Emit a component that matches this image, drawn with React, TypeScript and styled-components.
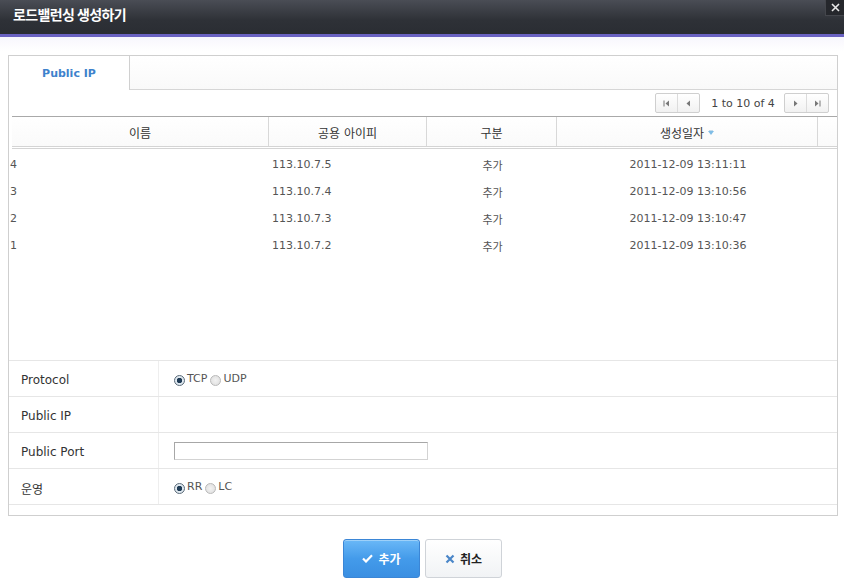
import React from "react";
import styled, { createGlobalStyle } from "styled-components";

const GlobalStyle = createGlobalStyle`
  html, body {
    margin: 0;
    padding: 0;
    background: #ffffff;
  }
  body {
    font-family: "DejaVu Sans", "Noto Sans CJK KR", sans-serif;
    font-size: 11px;
    color: #333;
  }
`;

const KR = `"DejaVu Sans", "Noto Sans CJK KR", sans-serif`;

type Row = { name: string; ip: string; kind: string; date: string };

const rows: Row[] = [
  { name: "4", ip: "113.10.7.5", kind: "추가", date: "2011-12-09 13:11:11" },
  { name: "3", ip: "113.10.7.4", kind: "추가", date: "2011-12-09 13:10:56" },
  { name: "2", ip: "113.10.7.3", kind: "추가", date: "2011-12-09 13:10:47" },
  { name: "1", ip: "113.10.7.2", kind: "추가", date: "2011-12-09 13:10:36" },
];

const App = () => {
  return (
    <Page>
      <GlobalStyle />
      <TitleBar>
        <Title>로드밸런싱 생성하기</Title>
        <CloseButton>
          <svg width="9" height="9" viewBox="0 0 9 9">
            <path d="M1 1L8 8M8 1L1 8" stroke="#e8e8e8" strokeWidth="1.6" />
          </svg>
        </CloseButton>
      </TitleBar>
      <AccentLine />
      <Body>
        <Panel>
          <TabStrip>
            <Tab>Public IP</Tab>
            <TabFiller />
          </TabStrip>
          <PagerRow>
            <PagerGroup>
              <PagerButton>
                <svg width="7" height="7" viewBox="0 0 7 7">
                  <path d="M1 0.5V6.5" stroke="#777" />
                  <path d="M6 0.5L2.5 3.5L6 6.5Z" fill="#777" />
                </svg>
              </PagerButton>
              <PagerButton>
                <svg width="5" height="7" viewBox="0 0 5 7">
                  <path d="M4 0.5L0.5 3.5L4 6.5Z" fill="#777" />
                </svg>
              </PagerButton>
            </PagerGroup>
            <PagerText>1 to 10 of 4</PagerText>
            <PagerGroup>
              <PagerButton>
                <svg width="5" height="7" viewBox="0 0 5 7">
                  <path d="M1 0.5L4.5 3.5L1 6.5Z" fill="#777" />
                </svg>
              </PagerButton>
              <PagerButton>
                <svg width="7" height="7" viewBox="0 0 7 7">
                  <path d="M1 0.5L4.5 3.5L1 6.5Z" fill="#777" />
                  <path d="M6 0.5V6.5" stroke="#777" />
                </svg>
              </PagerButton>
            </PagerGroup>
          </PagerRow>
          <Grid>
            <HeaderRow>
              <HeaderCell>이름</HeaderCell>
              <HeaderCell>공용 아이피</HeaderCell>
              <HeaderCell>구분</HeaderCell>
              <HeaderCell>
                생성일자
                <SortIcon />
              </HeaderCell>
              <HeaderCell $last />
            </HeaderRow>
            <GridBody>
              {rows.map((r) => (
                <DataRow key={r.name}>
                  <Cell>{r.name}</Cell>
                  <Cell $pad={3}>{r.ip}</Cell>
                  <Cell $center>{r.kind}</Cell>
                  <Cell $center>{r.date}</Cell>
                  <Cell />
                </DataRow>
              ))}
            </GridBody>
          </Grid>
          <FormTable>
            <FormRow>
              <Label>Protocol</Label>
              <Value $top>
                <Radio $checked />
                <RadioText>TCP</RadioText>
                <Radio />
                <RadioText>UDP</RadioText>
              </Value>
            </FormRow>
            <FormRow>
              <Label>Public IP</Label>
              <Value />
            </FormRow>
            <FormRow>
              <Label>Public Port</Label>
              <Value>
                <TextInput type="text" />
              </Value>
            </FormRow>
            <FormRow>
              <Label>운영</Label>
              <Value $top>
                <Radio $checked />
                <RadioText>RR</RadioText>
                <Radio />
                <RadioText>LC</RadioText>
              </Value>
            </FormRow>
          </FormTable>
          <PanelFooter />
        </Panel>
        <ButtonBar>
          <PrimaryButton>
            <svg width="11" height="9" viewBox="0 0 11 9">
              <path
                d="M1 4.5L4 7.5L10 1.2"
                stroke="#fff"
                strokeWidth="2.2"
                fill="none"
              />
            </svg>
            추가
          </PrimaryButton>
          <SecondaryButton>
            <svg width="10" height="10" viewBox="0 0 10 10">
              <path
                d="M1.5 1.5L8.5 8.5M8.5 1.5L1.5 8.5"
                stroke="#4a86c8"
                strokeWidth="2.2"
              />
            </svg>
            취소
          </SecondaryButton>
        </ButtonBar>
      </Body>
    </Page>
  );
};

export default App;

const Page = styled.div`
  width: 844px;
  height: 584px;
  display: flex;
  flex-direction: column;
  overflow: hidden;
`;

const TitleBar = styled.div`
  height: 34px;
  display: flex;
  justify-content: space-between;
  align-items: flex-start;
  background: linear-gradient(#4a4d55, #2e3137 60%, #2a2d33);
`;

const Title = styled.h1`
  margin: 0;
  padding: 4px 0 0 13px;
  font-family: "Noto Sans CJK KR", sans-serif;
  font-size: 14px;
  font-weight: 700;
  color: #ffffff;
  letter-spacing: -0.6px;
`;

const CloseButton = styled.div`
  width: 18px;
  height: 15px;
  display: flex;
  align-items: center;
  justify-content: center;
  background: #25272c;
  border-left: 1px solid #44464c;
  border-bottom: 1px solid #44464c;
`;

const AccentLine = styled.div`
  height: 3px;
  background: #6a62c2;
  box-shadow: 0 1px 0 #b9b4e6;
`;

const Body = styled.div`
  flex: 1;
  display: flex;
  flex-direction: column;
  padding: 18px 6px 0 8px;
  background: linear-gradient(#f7f6fd, #ffffff 14px);
`;

const Panel = styled.div`
  border: 1px solid #cfcfcf;
  background: #fff;
  display: flex;
  flex-direction: column;
`;

const TabStrip = styled.div`
  height: 34px;
  display: flex;
`;

const Tab = styled.div`
  width: 120px;
  border-right: 1px solid #d0d0d0;
  display: flex;
  align-items: center;
  justify-content: center;
  padding-top: 1px;
  font-family: "DejaVu Sans", sans-serif;
  font-size: 11px;
  font-weight: 700;
  color: #3e82cc;
  background: #fff;
`;

const TabFiller = styled.div`
  flex: 1;
  border-bottom: 1px solid #d6d6d6;
  background: linear-gradient(#ffffff, #f9f9f9);
`;

const PagerRow = styled.div`
  height: 26px;
  display: flex;
  align-items: center;
  justify-content: flex-end;
  padding-right: 8px;
`;

const PagerGroup = styled.div`
  display: flex;
  border: 1px solid #cfcfcf;
  border-radius: 2px;
  background: linear-gradient(#ffffff, #f1f1f1);
  height: 18px;
`;

const PagerButton = styled.div`
  width: 21px;
  display: flex;
  align-items: center;
  justify-content: center;
  & + & {
    border-left: 1px solid #dcdcdc;
  }
`;

const PagerText = styled.div`
  width: 84px;
  padding-left: 2px;
  box-sizing: border-box;
  text-align: center;
  font-size: 11px;
  color: #444;
`;

const Grid = styled.div`
  height: 244px;
  display: flex;
  flex-direction: column;
  border-bottom: 1px solid #e6e6e6;
`;

const HeaderRow = styled.div`
  display: grid;
  grid-template-columns: 257px 158px 130px 261px 1fr;
  margin-left: 3px;
  height: 29px;
  border-top: 1px solid #a9a9a9;
  border-bottom: 3px double #d4d4d4;
  background: linear-gradient(#ffffff, #fafafa);
`;

const HeaderCell = styled.div<{ $last?: boolean }>`
  display: flex;
  align-items: center;
  justify-content: center;
  padding-top: 1px;
  font-family: ${KR};
  font-size: 12px;
  color: #333;
  border-right: ${(p) => (p.$last ? "none" : "1px solid #d8d8d8")};
`;

const SortIcon = styled.span`
  display: inline-block;
  width: 0;
  height: 0;
  margin-left: 4px;
  margin-top: 2px;
  border-left: 3px solid transparent;
  border-right: 3px solid transparent;
  border-top: 4px solid #7fbde6;
  box-shadow: 0 -2px 0 -1px #c5dcec;
`;

const GridBody = styled.div`
  flex: 1;
  display: flex;
  flex-direction: column;
  padding-top: 2px;
`;

const DataRow = styled.div`
  display: grid;
  grid-template-columns: 260px 158px 130px 261px 1fr;
  height: 27px;
  align-items: center;
`;

const Cell = styled.div<{ $center?: boolean; $pad?: number }>`
  font-family: ${KR};
  font-size: 11px;
  color: #555;
  padding-left: ${(p) => p.$pad ?? 1}px;
  text-align: ${(p) => (p.$center ? "center" : "left")};
  white-space: nowrap;
`;

const FormTable = styled.div`
  display: flex;
  flex-direction: column;
`;

const FormRow = styled.div`
  display: grid;
  grid-template-columns: 150px 1fr;
  height: 35px;
  border-bottom: 1px solid #e6e6e6;
`;

const Label = styled.div`
  display: flex;
  align-items: center;
  padding: 3px 0 0 12px;
  font-family: ${KR};
  font-size: 12px;
  color: #333;
  border-right: 1px solid #eeeeee;
`;

const Value = styled.div<{ $top?: boolean }>`
  display: flex;
  align-items: ${(p) => (p.$top ? "flex-start" : "center")};
  padding: ${(p) => (p.$top ? "12px" : "0")} 0 0 15px;
`;

const Radio = styled.span<{ $checked?: boolean }>`
  width: 9px;
  height: 9px;
  margin-top: 2px;
  border-radius: 50%;
  border: 1px solid ${(p) => (p.$checked ? "#5a6a78" : "#b9b9b9")};
  background: ${(p) =>
    p.$checked
      ? "radial-gradient(circle, #1f3b55 0 2.5px, #dfe8ef 3px)"
      : "radial-gradient(circle, #f2f2f2, #dcdcdc)"};
  flex-shrink: 0;
`;

const RadioText = styled.span`
  font-family: ${KR};
  font-size: 11px;
  color: #555;
  margin: 0 3px 0 2px;
  line-height: 11px;
`;

const TextInput = styled.input`
  width: 250px;
  height: 14px;
  border: 1px solid #a7a7a7;
  border-right-color: #d3d3d3;
  border-bottom-color: #d3d3d3;
  padding: 1px;
  margin: 0;
  font-size: 11px;
`;

const PanelFooter = styled.div`
  height: 10px;
`;

const ButtonBar = styled.div`
  display: flex;
  justify-content: center;
  gap: 5px;
  margin-top: 23px;
  padding-right: 1px;
`;

const BaseButton = styled.button`
  width: 77px;
  height: 39px;
  display: flex;
  align-items: center;
  justify-content: center;
  gap: 5px;
  border-radius: 3px;
  font-family: "Noto Sans CJK KR", sans-serif;
  font-size: 12px;
  font-weight: 700;
  padding: 0;
  cursor: pointer;
`;

const PrimaryButton = styled(BaseButton)`
  color: #ffffff;
  border: 1px solid #3b86d6;
  background: linear-gradient(#6ab8f7, #449bea 50%, #3a8fe2);
  box-shadow: inset 0 1px 0 rgba(255, 255, 255, 0.35);
`;

const SecondaryButton = styled(BaseButton)`
  color: #222;
  border: 1px solid #cfd3d8;
  background: linear-gradient(#ffffff, #f1f3f5);
`;
